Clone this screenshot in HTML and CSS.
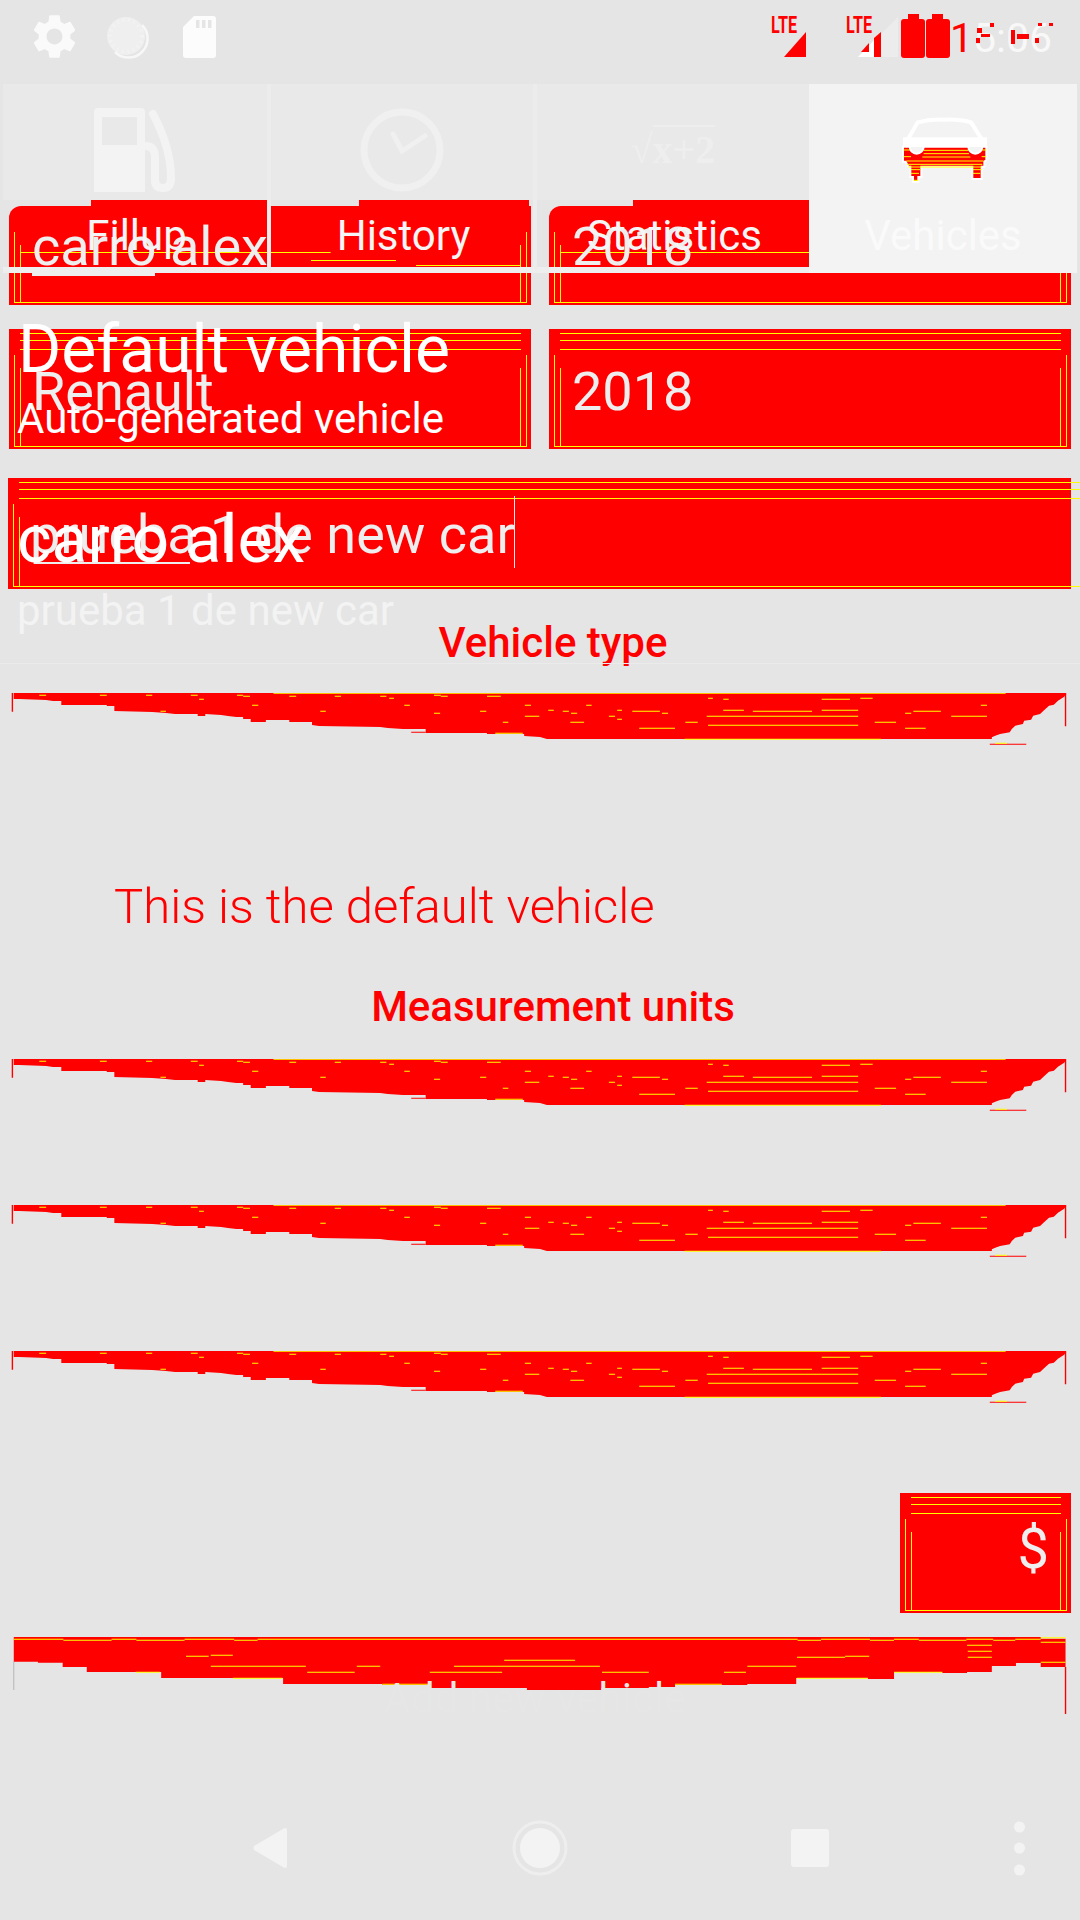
FILE: index.html
```html
<!DOCTYPE html>
<html lang="en">
<head>
    <meta charset="UTF-8" />
    <meta name="viewport" content="width=device-width, initial-scale=1.0"/>
    <title>Vehicles</title>
    <link rel="stylesheet" href="styles.css">
</head>
<body>
<svg class="defs" width="0" height="0">
    <symbol id="spinner" viewBox="0 72 1568 186" preserveAspectRatio="none">
        <polygon fill="#f00" points="20,72 1548,72 1548,75 1545,83 1540,90 1536,95 1530,107 1523,110 1515,125 1510,135 1500,140 1497,152 1487,155 1485,165 1474,170 1469,180 1466,190 1452,195 1445,200 1440,205 1440,210 794,210 784,204 761,201 761,195 707,195 707,192 618,192 618,180 585,180 563,177 552,174 463,171 453,168 453,159 420,159 420,153 386,153 386,159 364,159 364,150 353,150 353,144 343,144 331,141 321,138 298,135 298,141 287,141 287,135 254,135 241,132 221,129 166,126 166,111 155,111 155,108 89,108 89,96 77,96 67,93 28,90 20,90"/>
        <path fill="none" stroke="#f00" stroke-width="3" d="M1437 226H1490M597 190H618"/>
        <path fill="none" stroke="#f00" stroke-width="2" d="M18 72V128M1547 75V172"/>
        <path fill="none" stroke="#ff0" stroke-width="3" d="M397 73H1460M57 79h10M145 79h10M212 79h9M277 79h10M344 79h9M630 79h10M353 82h10M420 82h10M486 82h9M552 82h9M640 82h10M707 82h20M565 88h7M1028 88h7M1249 88h18M289 91h7M1050 91h8M1193 91h41M366 109h9M587 109h8M762 109h9M851 109h8M1424 109h9M796 124h8M896 124h7M1050 124h30M1193 124h53M233 127h8M465 127h8M697 127h9M817 127h9M918 127h40M1093 127h86M1326 127h40M630 133h9M829 133h9M961 133h9M1314 133h9M762 142h21M884 142h9M1026 142h220M1381 142h52M896 151h7M730 160h8M828 160h20M995 160h18M1270 160h31M1028 169h218M928 178h52M1314 178h30M719 193h40M994 211h285M1445 223h17"/>
    </symbol>
</svg>

<div class="screen">

    <!-- form, drawn underneath -->
    <main class="layer form">
        <div class="row">
            <div class="field field-first field-corner"><span class="value">carro alex</span><i class="under under-a"></i></div>
            <div class="field field-first field-corner"><span class="value">2018</span></div>
        </div>
        <div class="row row-second">
            <div class="field field-second"><span class="value">Renault</span></div>
            <div class="field field-second"><span class="value">2018</span></div>
        </div>
        <div class="field field-name"><span class="value">prueba 1 de new car<i class="cursor"></i></span><i class="under under-b"></i></div>

        <h2 class="section section-type">Vehicle type</h2>
        <svg class="spinner"><use href="#spinner"/></svg>

        <p class="default-note">This is the default vehicle</p>

        <h2 class="section section-units">Measurement units</h2>
        <svg class="spinner"><use href="#spinner"/></svg>
        <svg class="spinner spinner-next"><use href="#spinner"/></svg>
        <svg class="spinner spinner-next"><use href="#spinner"/></svg>

        <div class="field field-currency"><span class="value">$</span></div>

        <div class="add-button">
            <svg class="add-shape" viewBox="0 531 1568 231" preserveAspectRatio="none">
                <polygon fill="#f00" points="20,531 1511,531 1511,536 1547,536 1547,621 1511,621 1511,609 1475,609 1475,618 1440,618 1440,636 1404,636 1404,639 1368,639 1368,636 1298,636 1298,657 1260,657 1260,654 1156,654 1156,672 1085,672 1085,675 980,675 980,681 942,681 942,684 873,684 873,690 765,690 765,684 625,684 625,675 555,675 555,672 411,672 411,654 234,654 234,636 126,636 126,621 91,621 91,608 55,608 55,605 20,605"/>
                <path fill="none" stroke="#f00" stroke-width="2" d="M1547 621V762"/>
                <path fill="none" stroke="#888" stroke-width="1" d="M20 605V690"/>
                <path fill="none" stroke="#ff0" stroke-width="3" d="M20 538h72M162 538h36M268 538h72M374 538h784M1192 538h71M1298 538h36M1403 538h39M1474 538h37M92 541h70M198 541h70M340 541h34M1158 541h34M1263 541h35M1334 541h69M1442 541h32M1511 533h36M1511 547h36M1511 607h36M1404 556h36M1405 574h35M1405 592h35M270 589h33M1227 589h35M306 586h32M1157 592h70M732 601h103M306 619h138M518 619h34M659 619h212M1085 619h71M197 637h35M446 637h69M624 637h105M874 637h68M1051 637h32M1298 637h70M338 655h72M1157 655h103M555 673h70M980 673h68"/>
            </svg>
            <span class="add-label">Add new vehicle</span>
        </div>
    </main>

    <!-- vehicle list row, drawn over the form -->
    <section class="layer list-item">
        <div class="item-title">Default vehicle</div>
        <div class="item-sub">Auto-generated vehicle</div>
        <div class="item-car">carro alex</div>
        <div class="item-note">prueba 1 de new car</div>
        <div class="item-rule"></div>
    </section>

    <!-- status bar, tabs and navigation -->
    <div class="layer chrome">
        <header class="status">
            <div class="status-left">
                <svg class="icon-gear" viewBox="0 0 24 24"><path d="M19.14 12.94c.04-.3.06-.61.06-.94 0-.32-.02-.64-.07-.94l2.03-1.58c.18-.14.23-.41.12-.61l-1.92-3.32c-.12-.22-.37-.29-.59-.22l-2.39.96c-.5-.38-1.03-.7-1.62-.94l-.36-2.54c-.04-.24-.24-.41-.48-.41h-3.84c-.24 0-.43.17-.47.41l-.36 2.54c-.59.24-1.13.57-1.62.94l-2.39-.96c-.22-.08-.47 0-.59.22L2.74 8.87c-.12.21-.08.47.12.61l2.03 1.58c-.05.3-.09.63-.09.94s.02.64.07.94l-2.03 1.58c-.18.14-.23.41-.12.61l1.92 3.32c.12.22.37.29.59.22l2.39-.96c.5.38 1.03.7 1.62.94l.36 2.54c.05.24.24.41.48.41h3.84c.24 0 .44-.17.47-.41l.36-2.54c.59-.24 1.13-.56 1.62-.94l2.39.96c.22.08.47 0 .59-.22l1.92-3.32c.12-.22.07-.47-.12-.61l-2.01-1.58zM12 15.6c-1.98 0-3.6-1.62-3.6-3.6s1.62-3.6 3.6-3.6 3.6 1.62 3.6 3.6-1.62 3.6-3.6 3.6z"/></svg>
                <svg class="icon-dial" viewBox="0 0 44 44">
                    <circle cx="21" cy="21" r="19" fill="#efefef"/>
                    <circle cx="21" cy="21" r="16" fill="none" stroke="#f3f3f3" stroke-width="4" stroke-dasharray="1.5 4"/>
                    <path d="M37 10A19 19 0 0 1 10 37" fill="none" stroke="#f7f7f7" stroke-width="2.5"/>
                </svg>
                <svg class="icon-sd" viewBox="0 0 33 42">
                    <path d="M11 0H30q3 0 3 3V39q0 3-3 3H3q-3 0-3-3V11Z"/>
                    <path class="sd-slots" d="M13 4h3.5v8H13zM19 4h3.5v8H19zM25 4h3.5v8H25z"/>
                </svg>
            </div>
            <svg class="status-right" viewBox="765 0 300 84">
                <text class="lte" x="771" y="33" textLength="26" lengthAdjust="spacingAndGlyphs">LTE</text>
                <polygon fill="#f00" points="806,32 806,57 784,57"/>
                <polygon fill="#ececec" points="898,17 898,57 858,57"/>
                <polygon fill="#fff" points="881,33 881,57 858,57"/>
                <polygon fill="#f00" points="881,32 881,57 874,57 874,38"/>
                <polygon fill="#f00" points="869,43 869,52 861,52"/>
                <text class="lte" x="846" y="33" textLength="26" lengthAdjust="spacingAndGlyphs">LTE</text>
                <rect x="908" y="14" width="11" height="8" fill="#f00"/>
                <rect x="932" y="14" width="11" height="8" fill="#f00"/>
                <rect x="901" y="19" width="24" height="39" rx="3" fill="#f00"/>
                <rect x="926" y="19" width="24" height="39" rx="3" fill="#f00"/>
                <text class="clock" x="950" y="52"><tspan fill="#f00">1</tspan>5:06</text>
                <path fill="#f00" d="M977 28h5v5h-5zM981 34h9v3h-9zM976 38h4v5h-4zM990 23h4v4h-4zM1011 30h4v14h-4zM1017 34h12v5h-12zM1035 38h4v5h-4zM1038 23h4v3h-4zM1049 23h4v3h-4z"/>
            </svg>
        </header>

        <nav class="tabs">
            <div class="tab">
                <div class="tab-icon">
                    <svg class="icon-pump" viewBox="0 0 82 84">
                        <path fill-rule="evenodd" d="M0 4q0-4 4-4H47q4 0 4 4V84H0ZM8 9V37H43V9Z"/>
                        <path d="M52 38q9 0 9 12V72q0 8 8 8t8-10Q77 40 59 6" fill="none" stroke-width="8" stroke-linecap="round"/>
                    </svg>
                </div>
                <div class="tab-mark"></div>
                <div class="tab-label">Fillup</div>
            </div>
            <div class="tab">
                <div class="tab-icon">
                    <svg class="icon-clock" viewBox="0 0 84 84">
                        <circle cx="42" cy="42" r="38"/>
                        <path d="M33 26L42 43L65 28" stroke-width="5"/>
                    </svg>
                </div>
                <div class="tab-mark"></div>
                <div class="tab-label">History</div>
            </div>
            <div class="tab">
                <div class="tab-icon"><span class="sqrt">√<span class="sqrt-body">x+2</span></span></div>
                <div class="tab-mark"></div>
                <div class="tab-label">Statistics</div>
            </div>
            <div class="tab tab-active">
                <div class="tab-icon">
                    <svg class="icon-car" viewBox="0 0 360 270">
                        <path d="M66 118L104 52Q140 42 182 44Q228 42 264 52L306 118" fill="none" stroke="#fff" stroke-width="12"/>
                        <rect x="60" y="97" width="252" height="29" fill="#fff"/>
                        <path fill="#f00" stroke="#fff" stroke-width="6" d="M60 125H80A21 21 0 0 0 122 125H256A21 21 0 0 0 298 125H310V165L304 170V185H296V222H268V185H115V216H106V230H90V216H82V185H76L68 170H60Z"/>
                        <path fill="none" stroke="#ff0" stroke-width="3" d="M122 136H256M122 146H258M118 156H262M70 168H302M72 178H298M76 186H296M84 194H112M84 205H108M270 194H296M270 205H292M92 226H106M62 135H80M62 155H84M298 135H310M296 155H310"/>
                    </svg>
                </div>
                <div class="tab-label">Vehicles</div>
            </div>
        </nav>

        <svg class="navbar" viewBox="0 1820 1080 100">
            <path class="nav-fill" d="M287 1830V1866Q287 1868 285 1868Q284 1868 283 1867L254 1850Q253 1848 254 1846L283 1829Q284 1828 285 1828Q287 1828 287 1830Z"/>
            <circle cx="540" cy="1848" r="26" fill="none" stroke="#eee" stroke-width="3"/>
            <circle class="nav-fill" cx="540" cy="1848" r="20"/>
            <rect class="nav-fill" x="791" y="1829" width="38" height="38" rx="3"/>
            <circle class="nav-fill" cx="1019.5" cy="1827" r="5.5"/>
            <circle class="nav-fill" cx="1019.5" cy="1848" r="5.5"/>
            <circle class="nav-fill" cx="1019.5" cy="1870" r="5.5"/>
        </svg>
    </div>

</div>
</body>
</html>
```

FILE: styles.css
```css
* {
    box-sizing: border-box;
}

body {
    margin: 0;
    background: #e5e5e5;
    font-family: 'Roboto', sans-serif;
}

.defs {
    display: block;
}

.screen {
    display: grid;
    width: 1080px;
    height: 1920px;
    overflow: hidden;
}

/* the three drawings lie on top of each other */
.layer {
    position: relative;
    grid-area: 1 / 1;
    min-width: 0;
}

.form {
    z-index: 1;
    padding: 206px 9px 0;
}

.list-item {
    z-index: 2;
}

.chrome {
    z-index: 3;
}

/* form */
.row {
    display: grid;
    grid-template-columns: 522px 522px;
    gap: 18px;
}

.row-second {
    margin-top: 24px;
}

.field {
    position: relative;
    background: #f00;
    color: #eee;
    font-size: 54px;
    line-height: 60px;
    padding-left: 23px;
}

.field::before,
.field::after {
    content: "";
    position: absolute;
    pointer-events: none;
}

.field::before {
    left: 5px;
    right: 4px;
    top: 26px;
    bottom: 2px;
    border: 1px solid #ff0;
    border-top: 0;
}

.field::after {
    left: 11px;
    right: 10px;
    top: 0;
    bottom: 2px;
    background-image:
        linear-gradient(#ff0, #ff0),
        linear-gradient(#ff0, #ff0),
        linear-gradient(#ff0, #ff0),
        linear-gradient(#ff0, #ff0),
        linear-gradient(#ff0, #ff0);
    background-repeat: no-repeat;
    background-position: 0 4px, 0 11px, 0 20px, 0 39px, 100% 39px;
    background-size: 100% 1px, 100% 1px, 100% 1px, 1px 100%, 1px 100%;
}

.value {
    position: relative;
    z-index: 1;
    display: inline-block;
}

.field-first {
    height: 99px;
    padding-top: 11px;
}

.field-first::after {
    background-position: 0 46px, 70% 54px, 100% 59px, 0 39px, 100% 39px;
    background-size: 62% 1px, 17% 1px, 21% 1px, 1px 100%, 1px 100%;
}

.field-corner {
    border-top-left-radius: 12px;
}

.field-second {
    height: 120px;
    padding-top: 33px;
}

.field-name {
    width: 1063px;
    height: 111px;
    margin: 29px 0 0 -1px;
    padding-top: 27px;
    padding-left: 22px;
}

.field-name::before,
.field-name::after {
    right: -20px;
}

.cursor {
    position: absolute;
    right: 0;
    top: -9px;
    width: 1px;
    height: 72px;
    background: #eee;
}

.under {
    position: relative;
    z-index: 1;
    display: block;
    background: #eee;
}

.under-a {
    width: 123px;
    height: 3px;
    margin: -4px 0 0 0;
}

.under-b {
    width: 156px;
    height: 2px;
    margin: -3px 0 0 4px;
}

.section {
    margin: 0;
    color: #f00;
    font-size: 42px;
    font-weight: 500;
    line-height: 50px;
    text-align: center;
    padding-left: 26px;
}

.section-type {
    margin-top: 29px;
}

.spinner {
    display: block;
    width: 1080px;
    height: 62px;
    margin-left: -9px;
}

.section-type + .spinner {
    margin-top: 25px;
}

.spinner-next {
    margin-top: 84px;
}

.default-note {
    margin: 124px 0 0 105px;
    color: #f00;
    font-size: 49px;
    font-weight: 300;
    line-height: 56px;
}

.section-units {
    margin-top: 47px;
}

.section-units + .spinner {
    margin-top: 27px;
}

.field-currency {
    width: 171px;
    height: 120px;
    margin: 80px 0 0 891px;
    padding: 26px 22px 0 0;
    text-align: right;
    font-size: 56px;
}

.add-button {
    position: relative;
    margin: 24px 0 0 -9px;
    width: 1080px;
}

.add-shape {
    display: block;
    width: 1080px;
    height: 77px;
}

/* only the tall letters reach up into the red shape */
.add-label {
    position: absolute;
    left: 0;
    right: 10px;
    top: 39px;
    text-align: center;
    color: #e6e6e6;
    font-size: 42px;
    line-height: 46px;
}

/* list row */
.list-item {
    padding: 315px 0 0 18px;
    color: #fff;
}

.item-title {
    font-size: 66px;
    line-height: 70px;
}

.item-sub {
    margin: 9px 0 0 -1px;
    font-size: 42px;
    line-height: 50px;
}

.item-car {
    margin: 58px 0 0 -1px;
    font-size: 66px;
    line-height: 76px;
}

.item-note {
    margin: 8px 0 0 -1px;
    color: #f3f3f3;
    font-size: 42px;
    line-height: 50px;
}

.item-rule {
    height: 1px;
    margin: 27px 0 0 -18px;
    background: #ebebeb;
}

/* status bar */
.chrome {
    display: flex;
    flex-direction: column;
}

.status {
    display: flex;
    justify-content: space-between;
    align-items: flex-start;
    height: 84px;
}

.status-left {
    display: flex;
    align-items: center;
    gap: 24px;
    padding: 10px 0 0 28px;
}

.icon-gear {
    width: 53px;
    height: 53px;
    fill: #fafafa;
}

.icon-dial {
    width: 44px;
    height: 44px;
}

.icon-sd {
    width: 33px;
    height: 42px;
    margin-left: 10px;
    fill: #fcfcfc;
}

.sd-slots {
    fill: #e5e5e5;
}

.status-right {
    width: 300px;
    height: 84px;
    margin-right: 15px;
}

.lte {
    fill: #f00;
    font-size: 24px;
    font-weight: 700;
}

.clock {
    fill: #f8f8f8;
    font-size: 41px;
}

/* tabs */
.tabs {
    display: flex;
    height: 189px;
    padding-left: 3px;
}

.tab {
    display: flex;
    flex-direction: column;
    width: 268px;
    height: 189px;
    padding-top: 24px;
    background: linear-gradient(#e9e9e9 116px, transparent 116px);
    border-right: 4px solid #ececec;
    border-bottom: 6px solid #eee;
}

.tab-active {
    width: 268px;
    background: #f3f3f3;
    border: 0;
}

.tab:nth-child(2) {
    width: 266px;
}

.tab:nth-child(3) {
    width: 272px;
    border-right: 0;
}

.tab-icon {
    display: flex;
    justify-content: center;
    align-items: center;
    height: 84px;
    flex-shrink: 0;
}

.tab-mark {
    width: 176px;
    height: 6px;
    margin: 8px 0 0 auto;
    background: #f00;
}

.tab:nth-child(2) .tab-mark {
    width: 170px;
    margin-right: 4px;
}

.tab-label {
    margin-top: 8px;
    padding-left: 3px;
    text-align: center;
    color: #f5f5f5;
    font-size: 42px;
    line-height: 44px;
}

.tab-active .tab-label {
    margin-top: 22px;
    padding-left: 0;
    color: #fafafa;
}

.icon-pump {
    width: 82px;
    height: 84px;
    fill: #f3f3f3;
    stroke: #f3f3f3;
    stroke-width: 0;
}

.icon-clock {
    width: 84px;
    height: 84px;
    fill: none;
    stroke: #f0f0f0;
    stroke-width: 7;
    stroke-linecap: round;
}

.sqrt {
    color: #eeeeee;
    font-family: 'Liberation Serif', serif;
    font-size: 40px;
    font-weight: 700;
    line-height: 40px;
}

.sqrt-body {
    border-top: 2px solid #eeeeee;
}

.icon-car {
    width: 120px;
    height: 90px;
    flex-shrink: 0;
}

/* navigation */
.navbar {
    display: block;
    width: 1080px;
    height: 100px;
    margin-top: auto;
}

.nav-fill {
    fill: #f3f3f3;
}
```
